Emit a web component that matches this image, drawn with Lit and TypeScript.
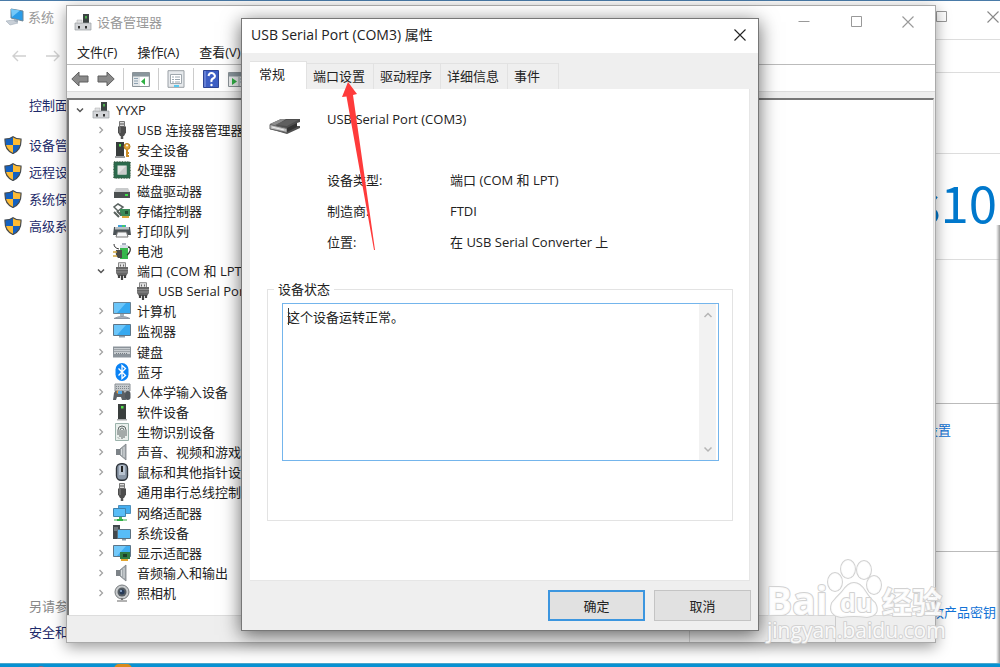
import { LitElement, html, css, svg, TemplateResult } from "lit";
import { customElement, property, state } from "lit/decorators.js";

const tower = svg`<path d="M9 1h6v10H9z" fill="#3c4343"/><path d="M11 3h2v2.500h-2z" fill="#4fae4f"/><path d="M1 10h16v7H1z" fill="#d3d5d8" stroke="#9a9da1" stroke-width=".7"/><path d="M3 7h5v3H3z" fill="#dfe1e3" stroke="#aaa" stroke-width=".5"/><path d="M4 13h2v2.500H4zM11 13h2v2.500h-2z" fill="#333"/>`;
const usb = svg`<path d="M6.500.5h5v5h-5z" fill="#d8d8d8" stroke="#777"/><path d="M7.500 2h1v2h-1zM9.500 2h1v2h-1z" fill="#555"/><path d="M5 5.500h8v6L11 15H7l-2-3.500z" fill="#4d4d4d"/><path d="M7 6v6" stroke="#888"/><path d="M9 15v3" stroke="#555" stroke-width="2.500"/>`;
const port = svg`<path d="M5.500.7h7v5h-7z" fill="#e2e2e2" stroke="#888"/><path d="M7 2.500h1v2H7zM10 2.500h1v2h-1z" fill="#666"/><path d="M3 5h12v6l-2 3H5l-2-3z" fill="#666"/><path d="M3 7.500h12M3 10h12" stroke="#8e8e8e"/><path d="M6 13v3M9 13v5M12 13v3" stroke="#444" stroke-width="2.200"/>`;
const monitor = svg`<path d="M.5 2.500h17v11H.5z" fill="#36a9f0" stroke="#5d7587"/><path d="M1 3h12L4 13H1z" fill="#6bc6fa"/><path d="M6 14h6v1.500H6z" fill="#8fa0ad"/>`;
const speaker = svg`<path d="M3 6h4v6H3z" fill="#7d8388"/><path d="M7 6l6-5v16l-6-5z" fill="#a4aaae" stroke="#7a7f83" stroke-width=".8"/><path d="M8.500 6v6M11 4v10" stroke="#d8dcde"/>`;
const keyboard = svg`<path d="M0 3.500h18v11H0z" fill="#8b939a"/><path d="M1 5h16v6H1z" fill="#c7ccd0"/><path d="M1.500 6.500h15M1.500 8.500h15M3 10.500h12" stroke="#737a80" stroke-dasharray="1 1"/>`;

const icons: Record<string, TemplateResult<2>> = {
  tower, usb, port, speaker, keyboard,
  monitor,
  computer: svg`<path d="M.5.5h17v11H.5z" fill="#36a9f0" stroke="#6b8292"/><path d="M1 1h12L4 11H1z" fill="#6bc6fa"/><path d="M7 12h4v2H7z" fill="#a3b2bd"/><path d="M1 16.500q8-4 16 0z" fill="#a9b2bd" stroke="#8d97a2"/>`,
  security: svg`<path d="M3 1h8v14H3z" fill="#373c3c"/><path d="M2 15h10v2H2z" fill="#9a9d9f"/><path d="M6 3h2v2.500H6z" fill="#4fdc48"/><circle cx="14" cy="5.500" r="3" fill="#e1a53a" stroke="#b67d1d"/><path d="M14 8v8M14 12h2M14 15h2" stroke="#c98d28" stroke-width="2"/><circle cx="14" cy="4.500" r="1" fill="#fff"/>`,
  chip: svg`<path d="M1 1h16v16H1z" fill="#2b6b4d" stroke="#335d43" stroke-width="1.500" stroke-dasharray="1 .6"/><path d="M4.500 4.500h9v9h-9z" fill="#e3e4e3"/><path d="M4.500 13.500l9-9v9z" fill="#c9cbca"/>`,
  disk: svg`<path d="M3 6h12l2 4H1z" fill="#c9cbcc"/><path d="M1 10h16v6H1z" fill="#4b5051"/><path d="M12 12h3v2h-3z" fill="#3fe048"/>`,
  storage: svg`<path d="M5 2l5 3-5 4-4-4z" fill="#fff" stroke="#5b6461" stroke-width="1.500"/><path d="M7 7h10v7H7z" fill="#3b8a58"/><path d="M4 9l4 4M1 10l5 5" stroke="#58615d" stroke-width="2"/><path d="M9 14h7v2H9z" fill="#d8a63c"/><path d="M12 9h3v3h-3z" fill="#214d31"/>`,
  printer: svg`<path d="M5 3h8v3H5z" fill="#3e9ed9"/><path d="M9 3h3v2H9z" fill="#45c76d"/><path d="M1 5h16l1 8H0z" fill="#4b5256"/><path d="M2 5h14v2.500H2z" fill="#bac0c3"/><path d="M4.500 10h9l1.500 5H3z" fill="#f5f6f7" stroke="#777"/>`,
  battery: svg`<path d="M7 3h8v14H7z" fill="#36b64c"/><path d="M9 1h4v2H9z" fill="#a8afbf"/><path d="M7 3h8v3H7z" fill="#d9dfe8"/><path d="M15 5q3 0 2 4-1 3-3 4" fill="none" stroke="#333" stroke-width="1.300"/><path d="M3 8h6v8H5q-3-3-2-8z" fill="#4b4b48"/><path d="M0 10h4M0 14h4" stroke="#d1a640" stroke-width="1.500"/><path d="M1 2q0 4 5 5" fill="none" stroke="#333"/>`,
  bluetooth: svg`<rect x="2.500" width="13" height="18" rx="6.500" fill="#0a82f4"/><path d="M5.500 5.500l7 7L9 15.500v-13l3.500 3-7 7" fill="none" stroke="#fff" stroke-width="1.300"/>`,
  hid: svg`<path d="M2 1h15v7H2z" fill="#c5c9cc" stroke="#8b9196"/><path d="M3 3.500h13M3 5.500h13" stroke="#81888d" stroke-dasharray="1 1"/><path d="M1 10q1-3 4-2h3q3-1 4 2l1 7H9l-1-3H4l-1 3H0z" fill="#5c6166"/><circle cx="5" cy="9" r="1.500" fill="#ef9a36"/><path d="M5 8h4v3H5z" fill="#51a6e4"/><rect x="12" y="8" width="5.500" height="9" rx="2.700" fill="#50565c"/>`,
  software: svg`<path d="M5 1h8v15H5z" fill="#393e3d"/><path d="M4 16h10v1.500H4z" fill="#a8aaab"/><path d="M8 3h2.500v2.500H8z" fill="#53e24b"/>`,
  finger: svg`<path d="M2.500.5h13v17h-13z" fill="#e9efec" stroke="#9bb2ab"/><g fill="none" stroke="#5f6766"><path d="M5 12V7q0-4 4-4t4 4v6"/><path d="M7 14V7.500q0-2.500 2-2.500t2 2.500V15"/><path d="M9 7v9M5 14.500l1 1"/></g>`,
  mouse: svg`<rect x="3.500" y=".7" width="11" height="16.600" rx="4.500" fill="#8b98a8" stroke="#2f353c" stroke-width="1.400"/><path d="M6 3q3-2 6 0v9H6z" fill="#b8c3d0"/><path d="M9 3v6" stroke="#222" stroke-width="2"/>`,
  network: svg`<path d="M5.500 1.500h12v8h-12z" fill="#45aef0" stroke="#4f8fba"/><path d="M.5 4.500h12v8H.5z" fill="#58bdf8" stroke="#4182ac"/><path d="M6 13h3v2H6z" fill="#51bb60"/><path d="M1 16h13" stroke="#9bd6a4" stroke-width="2"/><path d="M4 15h6v2H4z" fill="#2fae45"/>`,
  system: svg`<path d="M0 1h7v14H0z" fill="#42494d"/><path d="M1 4h4M1 6h4" stroke="#9fa8ad"/><path d="M4.500 5.500h13v9h-13z" fill="#58bdf8" stroke="#5c7180"/><path d="M9 15h4v1.500H9z" fill="#8799a5"/>`,
  display: svg`<path d="M.5 1.500h17v11H.5z" fill="#40aef2" stroke="#5d7587"/><path d="M1 2h12L4 12H1z" fill="#72c9fa"/><path d="M7 8h10v7H7z" fill="#2f7b45"/><path d="M10 10h4v3h-4z" fill="#1c3f29"/><path d="M8 15h7v2H8z" fill="#e2a52e"/>`,
  camera: svg`<circle cx="9" cy="8" r="7" fill="#c7cacc" stroke="#777b7e"/><circle cx="9" cy="8" r="4.500" fill="#565d63"/><circle cx="9" cy="8" r="2.500" fill="#263a58"/><circle cx="8" cy="7" r="1" fill="#9db9de"/><path d="M8 14h2v2H8z" fill="#777"/><path d="M4 17h10" stroke="#999" stroke-width="1.500"/>`,
  desktop: svg`<path d="M5 1l12 2v10L5 10z" fill="#2a9ce8" stroke="#6c8596"/><path d="M5 1l9 1.500L6 9z" fill="#74c8f8"/><path d="M8 11l4 1v2l-5 1z" fill="#a4b0bc"/><path d="M0 13l7-1 5 3-8 2z" fill="#c8cfd7" stroke="#a1acb8" stroke-width=".6"/>`,
  shield: svg`<path d="M9 .7Q12 3 17 3q.5 11-8 14.500Q.5 14 1 3 6 3 9 .7z" fill="#1461c0"/><path d="M9 .7Q12 3 17 3v6H9zM9 9v8.500Q2 15 1.200 9z" fill="#fdbb34"/><path d="M9 .7Q12 3 17 3q.5 11-8 14.500Q.5 14 1 3 6 3 9 .7z" fill="none" stroke="#454a4f" stroke-width="1.200"/>`,
  back: svg`<path d="M.8 9L8 2v4h9v6H8v4z" fill="#8a8a8a" stroke="#5f5f5f"/>`,
  forward: svg`<path d="M17.200 9L10 2v4H1v6h9v4z" fill="#8a8a8a" stroke="#5f5f5f"/>`,
  panel: svg`<path d="M.5 2.500h17v14H.5z" fill="#e4e8ea" stroke="#8b9398"/><path d="M1 3h16v3.500H1z" fill="#8a969d"/><path d="M2 8.500h4M2 11h4M2 13.500h4" stroke="#8ea2b2"/><path d="M8 7h8v9H8z" fill="#fff"/><path d="M13 8v7l-4-3.500z" fill="#2fb044"/>`,
  props: svg`<path d="M1 .7h16v16.600H1z" fill="#e6e9ec" stroke="#9aa0a6"/><path d="M3.500 4.500h11v9h-11z" fill="#fff" stroke="#a0a8ae"/><path d="M5 7h2M5 9.500h2M5 12h2M8 7h5M8 9.500h5M8 12h5" stroke="#9aa6b0"/><path d="M7 15h5v2H7z" fill="#59c9ef"/>`,
  help: svg`<path d="M1.500.5h15v17h-15z" fill="#3e5fc4" stroke="#2e4594"/><path d="M3 1v16" stroke="#8ea3e6"/><path d="M6.500 6Q7 3 9.500 3T13 6q0 1.500-2 2.500T9.500 12" fill="none" stroke="#fff" stroke-width="2"/><circle cx="9.500" cy="15" r="1.200" fill="#fff"/>`,
  scan: svg`<path d="M.5 2.500h17v14H.5z" fill="#eceeef" stroke="#8b9398"/><path d="M1 3h16v3.500H1z" fill="#8a969d"/><path d="M4 8v7l5-3.500z" fill="#2fb044"/><path d="M11 7v9" stroke="#9aa"/><path d="M12 9h5M12 12h5" stroke="#8ea2b2"/>`,
  min: svg`<path d="M3.500 8.500h11" stroke="#999"/>`,
  max: svg`<path d="M4.500 3.500h10v10h-10z" fill="none" stroke="#999" />`,
  close: svg`<path d="M3.500 3.500l11 11M14.500 3.500l-11 11" stroke="currentColor" stroke-width="1.100"/>`,
  left: svg`<path d="M16 9H3M8 4L3 9l5 5" fill="none" stroke="#d0d0d0" stroke-width="1.400"/>`,
  right: svg`<path d="M2 9h13M10 4l5 5-5 5" fill="none" stroke="#d0d0d0" stroke-width="1.400"/>`,
  open: svg`<path d="M6 7.500L9 10.500l3-3" fill="none" stroke="#555" stroke-width="1.500"/>`,
  shut: svg`<path d="M7.500 6l3 3-3 3" fill="none" stroke="#a3a3a3" stroke-width="1.300"/>`,
  up: svg`<path d="M5.500 11L9 7.500l3.500 3.500" fill="none" stroke="#b5b5b5" stroke-width="1.500"/>`,
  down: svg`<path d="M5.500 7.500L9 11l3.500-3.500" fill="none" stroke="#b5b5b5" stroke-width="1.500"/>`,
};

const icon = (name: string) =>
  html`<svg class="icon" viewBox="0 0 18 18" aria-hidden="true">${icons[name]}</svg>`;

const base = css`
  * { box-sizing: border-box; }
  :host { display: block; }
  button, textarea, legend, fieldset, ul, h1, h2, dl, dd, p {
    font: inherit; color: inherit; margin: 0; padding: 0; border: 0; background: none;
  }
  button { white-space: nowrap; }
  a { text-decoration: none; color: inherit; }
  ul { list-style: none; }
  .icon { width: 18px; height: 18px; flex: none; display: block; }
`;

@customElement("system-window")
export class SystemWindow extends LitElement {
  static styles = [base, css`
    :host { display: flex; background: #fff; border-top: 1px solid #4a7ba8; }
    aside { flex: 0 0 200px; display: flex; flex-direction: column; color: #1d2a6a; }
    .title { display: flex; align-items: center; gap: 4px; height: 32px; padding-left: 6px; color: #999; }
    .history { display: flex; gap: 16px; padding: 14px 10px 12px; }
    .home { padding: 18px 0 0 29px; line-height: 20px; }
    .tasks { padding: 16px 0 0 4px; }
    .tasks li { display: flex; align-items: center; gap: 7px; height: 27px; }
    .more { margin-top: auto; padding: 0 0 18px 29px; line-height: 26px; }
    .more p { color: #888; }
    main { flex: 1; display: flex; flex-direction: column; text-align: right; }
    section { border-top: 1px solid #ddd; }
    .caption { height: 38px; display: flex; justify-content: flex-end; align-items: center; gap: 34px; padding-bottom: 6px; color: #888; margin-right: -2px; }
    .address { height: 33px; }
    .search { height: 81px; }
    .brand { height: 106px; padding: 19px 3px 0 0; font: 51px/56px "Noto Sans CJK SC", "Open Sans", sans-serif; color: #0078cc; display: flex; justify-content: flex-end; }
    .spec { height: 144px; }
    .name { height: 148px; padding: 16px 49px 0 0; line-height: 20px; }
    .key { flex: 1; padding: 50px 4px 0 0; line-height: 20px; }
    .key, .name { color: #1373d6; border-color: #bbb; }
  `];
  render() {
    return html`
      <aside>
        <div class="title">${icon("desktop")}<span>系统</span></div>
        <div class="history">${icon("left")}${icon("right")}</div>
        <p class="home"><a href="#">控制面板主页</a></p>
        <ul class="tasks">
          ${["设备管理器", "远程设置", "系统保护", "高级系统设置"].map(
            (t) => html`<li>${icon("shield")}<a href="#">${t}</a></li>`)}
        </ul>
        <div class="more"><p>另请参阅</p><a href="#">安全和维护</a></div>
      </aside>
      <main>
        <div class="caption">${icon("max")}${icon("close")}</div>
        <section class="address"></section>
        <section class="search"></section>
        <section class="brand"><span>Windows</span><span>10</span></section>
        <section class="spec"></section>
        <section class="name"><a href="#">更改设置</a></section>
        <section class="key"><a href="#">更改产品密钥</a></section>
      </main>`;
  }
}

interface TreeNode { label: string; icon: string; level: number; state?: "open" | "shut"; }
const node = (label: string, icon: string, level = 1, state: TreeNode["state"] = "shut"): TreeNode =>
  ({ label, icon, level, state });

const nodes: TreeNode[] = [
  node("YYXP", "tower", 0, "open"),
  node("USB 连接器管理器", "usb"),
  node("安全设备", "security"),
  node("处理器", "chip"),
  node("磁盘驱动器", "disk"),
  node("存储控制器", "storage"),
  node("打印队列", "printer"),
  node("电池", "battery"),
  node("端口 (COM 和 LPT)", "port", 1, "open"),
  { label: "USB Serial Port (COM3)", icon: "port", level: 2 },
  node("计算机", "computer"),
  node("监视器", "monitor"),
  node("键盘", "keyboard"),
  node("蓝牙", "bluetooth"),
  node("人体学输入设备", "hid"),
  node("软件设备", "software"),
  node("生物识别设备", "finger"),
  node("声音、视频和游戏控制器", "speaker"),
  node("鼠标和其他指针设备", "mouse"),
  node("通用串行总线控制器", "usb"),
  node("网络适配器", "network"),
  node("系统设备", "system"),
  node("显示适配器", "display"),
  node("音频输入和输出", "speaker"),
  node("照相机", "camera"),
];

@customElement("device-manager")
export class DeviceManager extends LitElement {
  static styles = [base, css`
    :host { display: flex; flex-direction: column; background: #fff; border: 1px solid #aaa; box-shadow: 0 4px 14px #0006; color: #222; }
    .title { display: flex; align-items: center; height: 34px; padding: 0 18px 2px 7px; gap: 5px; color: #999; }
    h1 { flex: 1; font-weight: 400; }
    .controls { display: flex; gap: 34px; }
    .menu { display: flex; gap: 20px; padding: 0 10px; height: 25px; align-items: center; border-bottom: 1px solid #bbb; }
    .tools { display: flex; align-items: center; height: 26px; padding: 2px 0 0 4px; gap: 8px; }
    .sep { width: 1px; height: 22px; background: #ccc; }
    .body { flex: 1; min-height: 0; display: flex; background: #eee; padding: 6px 1px 0 0; border-top: 1px solid #ddd; }
    ul { flex: 1; display: flex; flex-direction: column; background: #fff; border: solid #777; border-width: 2px 1px 0 2px; border-right-color: #ddd; padding: 0 0 12px 2px; }
    li { flex: 1; display: flex; align-items: center; gap: 6px; white-space: nowrap; }
    .twist { width: 18px; margin-right: -3px; }
    .level1 { padding-left: 21px; }
    .level2 { padding-left: 42px; }
    .status { height: 27px; background: #eee; border-top: 1px solid #ddd; display: flex; justify-content: flex-end; }
    .cell { border-left: 1px solid #ccc; width: 146px; }
    .last { width: 100px; }
  `];
  render() {
    return html`
      <div class="title">${icon("tower")}<h1>设备管理器</h1>
        <div class="controls">${icon("min")}${icon("max")}${icon("close")}</div></div>
      <nav class="menu">${["文件(F)", "操作(A)", "查看(V)", "帮助(H)"].map((m) => html`<button>${m}</button>`)}</nav>
      <div class="tools">
        ${["back", "forward", "", "panel", "", "props", "", "help", "scan"].map((t) =>
          t ? html`<button aria-label=${t}>${icon(t)}</button>` : html`<span class="sep"></span>`)}
      </div>
      <div class="body">
        <ul role="tree">
          ${nodes.map((n) => html`<li role="treeitem" class="level${n.level}">
            <span class="twist">${n.state ? icon(n.state) : ""}</span>${icon(n.icon)}<span>${n.label}</span></li>`)}
        </ul>
      </div>
      <div class="status"><span class="cell"></span><span class="cell last"></span></div>`;
  }
}

@customElement("port-dialog")
export class PortDialog extends LitElement {
  @property() heading = "USB Serial Port (COM3)";
  @state() private tab = "常规";
  private tabs = ["常规", "端口设置", "驱动程序", "详细信息", "事件"];
  static styles = [base, css`
    :host { display: flex; flex-direction: column; background: #efefef; border: 1px solid #777; box-shadow: 0 4px 18px #0009; color: #222; }
    .title { display: flex; justify-content: space-between; align-items: center; height: 34px; padding: 0 9px 2px; background: #fff; }
    h2 { font-weight: 400; font-size: 14px; }
    .x { color: #222; }
    .tabs { display: flex; align-items: flex-end; padding: 8px 8px 0; }
    .tabs button { height: 26px; padding: 0 8px 2px 6px; border: solid #e2e2e2; border-width: 1px 1px 0 0; }
    .tabs button:last-child { padding-right: 18px; }
    .tabs .active { height: 28px; background: #fff; padding: 0 21px 4px 9px; }
    .panel { flex: 1; margin: 0 8px; background: #fff; border: solid #e6e6e6; border-width: 0 1px 1px 0; padding: 18px 16px 59px 17px; display: flex; flex-direction: column; }
    .device { display: flex; align-items: center; gap: 24px; height: 24px; }
    .device svg { width: 36px; height: 24px; margin-top: 12px; }
    dl { display: grid; grid-template-columns: 123px 1fr; row-gap: 11px; line-height: 20px; padding: 39px 0 0 60px; }
    fieldset { flex: 1; min-height: 0; margin-top: 27px; border: 1px solid #e3e3e3; padding: 4px 13px 59px 14px; display: flex; min-width: 0; }
    legend { margin-left: -8px; padding: 0 4px; line-height: 20px; }
    .box { flex: 1; display: flex; border: 1px solid #74b5ec; position: relative; }
    textarea { flex: 1; resize: none; outline: 0; padding: 3px 4px; line-height: 20px; overflow: hidden; }
    .caret { position: absolute; left: 5px; top: 4px; width: 1px; height: 17px; background: #333; }
    .scroll { width: 19px; background: #f2f2f2; display: flex; flex-direction: column; align-items: center; justify-content: space-between; padding: 2px 0; border-right: 2px solid #fff; }
    .actions { display: flex; justify-content: flex-end; gap: 9px; padding: 9px 7px 9px; }
    .actions button { width: 97px; height: 31px; background: #e1e1e1; border: 1px solid #c4c4c4; }
    .actions .ok { border: 2px solid #3c96df; }
  `];
  render() {
    return html`
      <div class="title"><h2>${this.heading} 属性</h2><button class="x" aria-label="关闭">${icon("close")}</button></div>
      <div class="tabs" role="tablist">
        ${this.tabs.map((t) => html`<button role="tab" class=${t === this.tab ? "active" : ""} @click=${() => (this.tab = t)}>${t}</button>`)}
      </div>
      <div class="panel">
        <div class="device">
          <svg viewBox="0 0 36 24" aria-hidden="true">
            <path d="M3 11l11-5h19v3l-3 1v3h3v2l-13 6L3 16z" fill="#4e4e4e"/>
            <path d="M3 11l11-5h5L8 13z" fill="#8d8d8d"/><path d="M8 12l11-5h12l-11 6z" fill="#5f5f5f"/>
            <path d="M3 11.500l17 4v4L3 16z" fill="#bdbdbd" stroke="#666"/><path d="M5 14l12 3" stroke="#eee"/><path d="M20 15l10-5v4l-10 5z" fill="#333"/>
          </svg>
          <span>${this.heading}</span>
        </div>
        <dl>
          <dt>设备类型:</dt><dd>端口 (COM 和 LPT)</dd>
          <dt>制造商:</dt><dd>FTDI</dd>
          <dt>位置:</dt><dd>在 USB Serial Converter 上</dd>
        </dl>
        <fieldset>
          <legend>设备状态</legend>
          <div class="box">
            <textarea aria-label="设备状态" readonly .value=${"这个设备运转正常。"}></textarea>
            <span class="caret"></span>
            <div class="scroll">${icon("up")}${icon("down")}</div>
          </div>
        </fieldset>
      </div>
      <div class="actions"><button class="ok">确定</button><button>取消</button></div>`;
  }
}

@customElement("app-root")
export class AppRoot extends LitElement {
  static styles = [base, css`
    :host { position: relative; height: 100vh; min-height: 640px; overflow: hidden; display: flex; flex-direction: column;
      font: 13px/20px "Open Sans", "Noto Sans CJK SC", sans-serif; }
    system-window { flex: 1; }
    .taskbar { height: 4px; background: #0791d2; border-top: 1px solid #4ba8cc; display: flex; gap: 68px; padding-left: 36px; overflow: hidden; }
    .app { width: 10px; height: 6px; border-radius: 5px 5px 0 0; background: #8a6b88; margin-top: 2px; }
    .warm { background: #d98a1c; width: 18px; margin-top: 0; }
    .edge { position: absolute; right: 0; top: 225px; bottom: 4px; width: 4px; background: linear-gradient(90deg, #fff0, #999); }
    device-manager { position: absolute; left: 66px; right: 64px; top: 5px; bottom: 24px; }
    port-dialog { position: absolute; left: 241px; right: 241px; top: 18px; bottom: 36px; }
    .pointer { position: absolute; left: 340px; top: 80px; width: 40px; height: 172px; }
    .mark { position: absolute; right: 50px; bottom: 16px; width: 186px; height: 96px; }
  `];
  render() {
    return html`
      <system-window></system-window>
      <div class="taskbar"><span class="app"></span><span class="app warm"></span></div>
      <div class="edge"></div>
      <device-manager></device-manager>
      <port-dialog></port-dialog>
      <svg class="pointer" viewBox="0 0 40 172" aria-hidden="true">
        <path d="M8 2l9 12-4 1 22 155h-1L6.500 16.500 2 17z" fill="#fe3b3b"/>
      </svg>
      <svg class="mark" viewBox="0 0 186 96" font-family="Open Sans, Noto Sans CJK SC, sans-serif" paint-order="stroke"
        fill="#fff" fill-opacity=".9" stroke="#d2d2d2" stroke-width="2" stroke-linejoin="round">
        <ellipse cx="71" cy="27" rx="7" ry="9"/><ellipse cx="84" cy="14" rx="7" ry="9"/>
        <ellipse cx="100" cy="15" rx="7" ry="9"/><ellipse cx="110" cy="30" rx="7" ry="9"/>
        <path d="M90 28q6 0 11 8t10 12q6 12-8 14-6-1-13-1t-13 1q-13-2-9-14 4-5 10-11 6-9 12-9z"/>
        <text x="2" y="60" font-size="39" font-weight="700">Bai</text>
        <text x="76" y="57" font-size="25" font-weight="700">du</text>
        <text x="118" y="58" font-size="30" font-weight="700">经验</text>
        <text x="3" y="83" font-size="21" font-weight="400">jingyan.baidu.com</text>
      </svg>`;
  }
}
